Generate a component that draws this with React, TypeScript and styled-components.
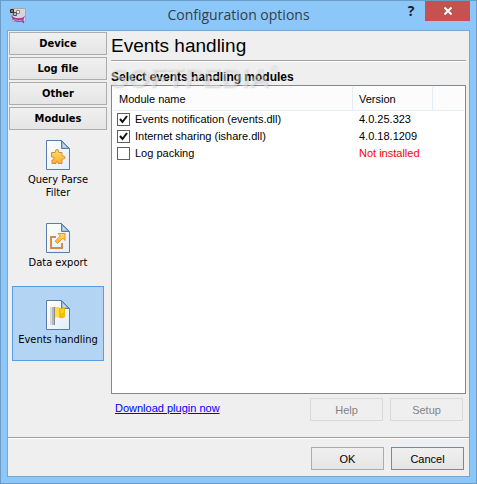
import React, { useState } from "react";
import styled, { createGlobalStyle, css } from "styled-components";

const ui = '"Liberation Sans", Arial, sans-serif';
const tahoma = '"DejaVu Sans Condensed", "Noto Sans", sans-serif';

const GlobalStyle = createGlobalStyle`
  * { box-sizing: border-box; }
  html, body, #root { height: 100%; }
  body { margin: 0; font: 11px/16px ${ui}; color: #000; }
`;

const Window = styled.div`
  display: flex;
  flex-direction: column;
  min-height: 100%;
  padding: 0 7px 7px;
  border: 1px solid #6c9bc5;
  background: #8cc7fa;
`;

const TitleBar = styled.header`
  display: grid;
  grid-template-columns: 72px 1fr 72px;
  height: 29px;
  flex: none;
`;

const AppIcon = styled.svg`
  width: 16px;
  height: 16px;
  margin: 7px 2px;
`;

const Title = styled.h1`
  margin: 0;
  font: 14px/28px "Open Sans", sans-serif;
  color: #333e48;
  text-align: center;
  white-space: nowrap;
`;

const WindowControls = styled.div`
  display: flex;
  justify-content: flex-end;
  align-items: flex-start;
  gap: 5px;
  margin-right: -1px;
`;

const HelpControl = styled.button`
  width: 18px;
  height: 20px;
  padding: 0;
  border: 0;
  background: none;
  color: #1c1c1c;
  font: bold 14px/20px "Open Sans", sans-serif;
`;

const CloseControl = styled.button`
  display: flex;
  align-items: center;
  justify-content: center;
  flex: none;
  width: 45px;
  height: 20px;
  padding: 0;
  border: 0;
  background: #c75050;
`;

const Client = styled.main`
  display: flex;
  flex-direction: column;
  flex: 1;
  margin: 0 -1px -1px;
  border: 1px solid #74a7d4;
  background: #efefef;
`;

const Body = styled.div`
  display: flex;
  flex: 1;
  gap: 4px;
  padding: 1px 3px 0 1px;
`;

const Sidebar = styled.nav`
  display: flex;
  flex-direction: column;
  gap: 2px;
  width: 98px;
  flex: none;
`;

const face = css`
  border: 1px solid #acacac;
  background: linear-gradient(#f0f0f0, #e5e5e5);
  color: #000;
  padding: 0;
  height: 23px;
`;

const GroupButton = styled.button`
  ${face}
  font: bold 11px/20px ${tahoma};
`;

const Tile = styled.button<{ $selected?: boolean; $top: number }>`
  display: flex;
  flex-direction: column;
  align-items: center;
  gap: 3px;
  min-height: 75px;
  margin: 0 3px;
  padding: ${(p) => p.$top}px 4px 0;
  border: 1px solid ${(p) => (p.$selected ? "#569de5" : "transparent")};
  background: ${(p) => (p.$selected ? "#b3d4f3" : "transparent")};
  color: #000;
  font: 11px/13px ${tahoma};
`;

const Content = styled.section`
  display: flex;
  flex-direction: column;
  flex: 1;
  min-width: 0;
`;

const Heading = styled.h2`
  margin: 0;
  font: 19px/28px ${ui};
`;

const Rule = styled.hr`
  width: 100%;
  height: 2px;
  margin: 0;
  border: 0;
  border-top: 1px solid #a0a0a0;
  background: #fff;
  flex: none;
`;

const Caption = styled.div`
  position: relative;
  height: 23px;
  font: bold 12px/30px ${ui};
`;

const Watermark = styled.span`
  position: absolute;
  z-index: 1;
  left: -2px;
  top: 0;
  display: flex;
  font: bold 28px/32px ${ui};
  color: rgba(250, 250, 250, 0.45);
  text-shadow: 1px 1px 2px rgba(0, 0, 0, 0.14);
  pointer-events: none;
`;

const Registered = styled.sup`
  font: 11px/12px ${ui};
`;

const ListBox = styled.div`
  flex: 1;
  padding: 1px;
  border: 1px solid #828790;
  background: #fff;
`;

const Table = styled.table`
  width: 100%;
  border-collapse: separate;
  border-spacing: 0;
  table-layout: fixed;
`;

const NameColumn = styled.col``;
const VersionColumn = styled.col`
  width: 80px;
`;
const SpareColumn = styled.col`
  width: 31px;
`;

const HeadCell = styled.th`
  height: 24px;
  padding: 0 6px;
  border-right: 1px solid #e3edf8;
  border-bottom: 1px solid #e3edf8;
  background: #fcfcfc;
  font: 11px/22px ${ui};
  text-align: left;
  &:last-child { border-right: 0; }
`;

const Cell = styled.td<{ $missing?: boolean }>`
  height: 17px;
  padding: 0 6px;
  color: ${(p) => (p.$missing ? "#f00" : "#000")};
  font: 11px/17px ${ui};
  white-space: nowrap;
`;

const CheckLabel = styled.label`
  display: flex;
  align-items: center;
  gap: 5px;
  margin-left: -2px;
`;

const Check = styled.input`
  appearance: none;
  width: 13px;
  height: 13px;
  margin: 0;
  border: 1px solid #606060;
  background: #fff;
  &:checked {
    background: #fff url("data:image/svg+xml,%3Csvg xmlns='http://www.w3.org/2000/svg' viewBox='0 0 11 11'%3E%3Cpath d='M2 5l2.5 3L9 2' fill='none' stroke='%23111' stroke-width='2'/%3E%3C/svg%3E");
  }
`;

const Actions = styled.div<{ $pad: string }>`
  display: flex;
  align-items: flex-start;
  justify-content: flex-end;
  gap: 7px;
  padding: ${(p) => p.$pad};
`;

const Link = styled.a`
  margin-right: auto;
  color: #00f;
  line-height: 20px;
`;

const Push = styled.button<{ $focused?: boolean }>`
  ${face}
  width: 73px;
  font: 11px/20px ${ui};
  ${(p) => p.$focused && "border-color: #3399ff;"}
  &:disabled {
    border-color: #d9d9d9;
    background: #efefef;
    color: #838383;
  }
`;

const PageSvg = styled.svg`
  width: 24px;
  height: 30px;
  flex: none;
`;

const Page = ({ children }: { children: React.ReactNode }) => (
  <PageSvg viewBox="0 0 24 30" aria-hidden="true">
    <defs>
      <linearGradient id="paper" x1="0" y1="0" x2="1" y2="1">
        <stop offset="0" stopColor="#fff" />
        <stop offset="1" stopColor="#e1effa" />
      </linearGradient>
      <linearGradient id="gold" x1="0" y1="0" x2="0" y2="1">
        <stop offset="0" stopColor="#ffe066" />
        <stop offset="1" stopColor="#ffad33" />
      </linearGradient>
    </defs>
    <path d="M.5.5h15l8 8v21H.5z" fill="url(#paper)" stroke="#5b7ba9" />
    <path d="M15.5.5v8h8z" fill="#7fa6cc" stroke="#5b7ba9" />
    <path d="M16.5 3v4.500h4.500z" fill="#c3dcf2" />
    {children}
  </PageSvg>
);

const Puzzle = () => (
  <Page>
    <path
      d="M5.500 12.500h3.500q1 0 .5-1.500 0-1.500 1.500-1.500t1.500 1.500q-.5 1.500.5 1.500h3v3q0 1 1.500.5 1.500 0 1.500 1.500t-1.500 1.500q-1.500-.5-1.500.5v4h-4q.5-2-1-2t-1 2H6v-3.500q2 .5 2-1.500t-2.500-1.500z"
      fill="url(#gold)"
      stroke="#d98a3a"
    />
  </Page>
);

const Export = () => (
  <Page>
    <path d="M10 14H5v11h11v-5" fill="none" stroke="#d98b45" strokeWidth="2" />
    <path d="M12 10.500h7v7l-2.300-2.300-5.200 5.300-2.300-2.300 5.200-5.300z" fill="url(#gold)" stroke="#e2952d" />
  </Page>
);

const Flag = () => (
  <Page>
    <path d="M8 8q3-2 6 0 2 1 5-1v10q-3 2-5 1-3-2-6 0z" fill="#f0bd00" />
    <path d="M8 8q3-2 5 0v9.500q-2-1-5 .5z" fill="#ffdf3a" />
    <path d="M14.500 9q2 .5 3.500-.500v4q-2 1-3.500.500z" fill="#ffd21f" />
    <path d="M4.500 7h4v18h-4z" fill="#b5b5b5" />
    <path d="M5.500 7v18" stroke="#dedede" />
    <path d="M8.500 7v18" stroke="#8a8a8a" />
  </Page>
);

const modules = [
  { name: "Events notification (events.dll)", version: "4.0.25.323", on: true },
  { name: "Internet sharing (ishare.dll)", version: "4.0.18.1209", on: true },
  { name: "Log packing", version: "Not installed", on: false, missing: true },
];

export default function App() {
  const [enabled, setEnabled] = useState(modules.map((m) => m.on));
  return (
    <>
      <GlobalStyle />
      <Window>
        <TitleBar>
          <AppIcon viewBox="0 0 16 16" aria-hidden="true">
            <path d="M2.500.500h13v13h-13z" fill="#d6d6da" stroke="#a9a6b0" />
            <path d="M6.500 2.500h3v3h-3z" fill="#eee" stroke="#8c8c8c" />
            <path d="M3.500 4.500h3v3h-3z" fill="#bbb" stroke="#555" />
            <path d="M.5 1.500h3v3h-3z" fill="#777" stroke="#2d2d2d" />
            <path d="M1 7q3 4 10 3 2 0 4-2.500l-1.500 4 .5 4-2.500-2Q3 15.500 1 7z" fill="#8f3a9e" />
            <path d="M4.500 11.500q4 2 8 .5" stroke="#cf9ad8" fill="none" />
          </AppIcon>
          <Title>Configuration options</Title>
          <WindowControls>
            <HelpControl aria-label="Help">?</HelpControl>
            <CloseControl aria-label="Close">
              <svg width="8" height="8" viewBox="0 0 8 8">
                <path d="M.5.500l7 7M7.500.500l-7 7" stroke="#fff" strokeWidth="2" />
              </svg>
            </CloseControl>
          </WindowControls>
        </TitleBar>
        <Client>
          <Body>
            <Sidebar>
              <GroupButton>Device</GroupButton>
              <GroupButton>Log file</GroupButton>
              <GroupButton>Other</GroupButton>
              <GroupButton>Modules</GroupButton>
              <Tile $top={7}><Puzzle />Query Parse Filter</Tile>
              <Tile $top={13}><Export />Data export</Tile>
              <Tile $top={13} $selected><Flag />Events handling</Tile>
            </Sidebar>
            <Content>
              <Heading>Events handling</Heading>
              <Rule />
              <Caption>
                Select events handling modules
                <Watermark aria-hidden="true">SOFTPEDIA<Registered>®</Registered></Watermark>
              </Caption>
              <ListBox>
                <Table>
                  <colgroup>
                    <NameColumn />
                    <VersionColumn />
                    <SpareColumn />
                  </colgroup>
                  <thead>
                    <tr>
                      <HeadCell>Module name</HeadCell>
                      <HeadCell>Version</HeadCell>
                      <HeadCell />
                    </tr>
                  </thead>
                  <tbody>
                    {modules.map((m, i) => (
                      <tr key={m.name}>
                        <Cell>
                          <CheckLabel>
                            <Check
                              type="checkbox"
                              checked={enabled[i]}
                              onChange={() => setEnabled(enabled.map((v, j) => (j === i ? !v : v)))}
                            />
                            {m.name}
                          </CheckLabel>
                        </Cell>
                        <Cell $missing={m.missing} colSpan={2}>{m.version}</Cell>
                      </tr>
                    ))}
                  </tbody>
                </Table>
              </ListBox>
              <Actions $pad="4px 3px 16px 4px">
                <Link href="#plugin">Download plugin now</Link>
                <Push disabled>Help</Push>
                <Push disabled>Setup</Push>
              </Actions>
            </Content>
          </Body>
          <Rule />
          <Actions $pad="8px 5px 6px">
            <Push>OK</Push>
            <Push $focused>Cancel</Push>
          </Actions>
        </Client>
      </Window>
    </>
  );
}
